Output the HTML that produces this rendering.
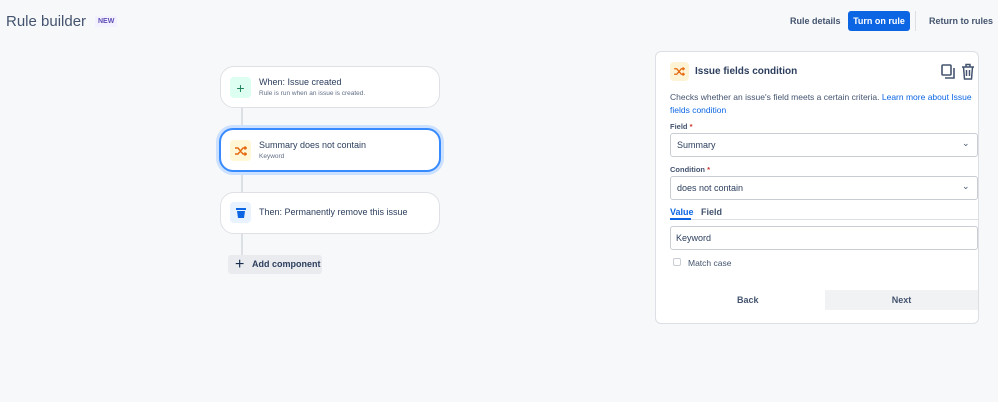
<!DOCTYPE html>
<html><head><meta charset="utf-8"><style>
*{margin:0;padding:0;box-sizing:border-box}
body{width:998px;height:402px;background:#f7f8f9;font-family:"Liberation Sans",sans-serif;color:#172b4d;position:relative;overflow:hidden}
.a{position:absolute;white-space:nowrap}
.card{position:absolute;background:#fff;border:1px solid #dfe1e6;border-radius:14px}
.ic{position:absolute;width:21px;height:21px;border-radius:4px;display:flex;align-items:center;justify-content:center}
.t{font-size:9px;color:#2c3e5d}
.s{font-size:6.5px;color:#626f86}
.sel{position:absolute;left:670px;width:308px;background:#fff;border:1px solid #c9cdd4;border-radius:3px;font-size:9px;color:#2c3e5d;padding-left:6px;display:flex;align-items:center}
.lbl{font-size:7.5px;font-weight:bold;color:#44546f}
.lbl b{color:#c9372c}
</style></head><body>
<div class="a" style="left:6px;top:13px;font-size:15px;color:#44546f">Rule builder</div>
<div class="a" style="left:95px;top:16px;height:11px;padding:0 3px;background:#f3f0ff;color:#5e4db2;font-size:7px;font-weight:bold;line-height:11px">NEW</div>
<div class="a" style="left:790px;top:16px;font-size:9px;font-weight:bold;color:#44546f">Rule details</div>
<div class="a" style="left:848px;top:11px;width:62px;height:20px;background:#0c66e4;border-radius:3px;color:#fff;font-size:9px;font-weight:bold;text-align:center;line-height:20px">Turn on rule</div>
<div class="a" style="left:915px;top:11px;width:1px;height:20px;background:#dcdfe4"></div>
<div class="a" style="left:929px;top:16px;font-size:9px;font-weight:bold;color:#44546f">Return to rules</div>

<div class="a" style="left:241px;top:108px;width:2px;height:147px;background:#dcdfe4"></div>
<div class="card" style="left:220px;top:66px;width:220px;height:42px"></div>
<div class="ic" style="left:230px;top:77px;background:#dcfff1;color:#1f845a;font-size:14px">+</div>
<div class="a t" style="left:259px;top:77px">When: Issue created</div>
<div class="a s" style="left:259px;top:90px">Rule is run when an issue is created.</div>

<div class="card" style="left:219px;top:128px;width:222px;height:44px;border:2px solid #388bff;box-shadow:0 0 0 3px #cce0ff"></div>
<div class="ic" style="left:230px;top:140px;background:#fff7d6"><svg width="12" height="10" viewBox="0 0 12 10" fill="none" stroke="#e56910" stroke-width="1.4"><path d="M0 2h3l5 6h3M0 8h3l5-6h3M9.5 0.5l1.8 1.5-1.8 1.5M9.5 6.5l1.8 1.5-1.8 1.5"/></svg></div>
<div class="a t" style="left:259px;top:140px">Summary does not contain</div>
<div class="a s" style="left:259px;top:153px">Keyword</div>

<div class="card" style="left:220px;top:192px;width:220px;height:42px"></div>
<div class="ic" style="left:230px;top:202px;background:#e9f2ff"><svg width="10" height="11" viewBox="0 0 10 11"><rect x="0" y="1" width="10" height="2" fill="#0c66e4"/><path d="M1 4h8l-1 7H2z" fill="#0c66e4"/></svg></div>
<div class="a t" style="left:259px;top:207px">Then: Permanently remove this issue</div>

<div class="a" style="left:228px;top:255px;width:94px;height:19px;background:#e9ebee;border-radius:3px;font-size:9px;font-weight:bold;color:#2c3e5d;line-height:19px;padding-left:24px">Add component</div>
<div class="a" style="left:235px;top:258px;font-size:16px;line-height:13px;color:#172b4d">+</div>

<div class="a" style="left:655px;top:51px;width:324px;height:273px;background:#fff;border:1px solid #dcdfe4;border-radius:6px"></div>
<div class="ic" style="left:670px;top:62px;width:19px;height:19px;background:#fff3d6"><svg width="11" height="9" viewBox="0 0 12 10" fill="none" stroke="#e56910" stroke-width="1.4"><path d="M0 2h3l5 6h3M0 8h3l5-6h3M9.5 0.5l1.8 1.5-1.8 1.5M9.5 6.5l1.8 1.5-1.8 1.5"/></svg></div>
<div class="a" style="left:695px;top:66px;font-size:10px;font-weight:bold;color:#2c3e5d">Issue fields condition</div>
<svg class="a" style="left:941px;top:64px" width="15" height="16" viewBox="0 0 15 16" fill="none" stroke="#44546f" stroke-width="1.6"><rect x="1" y="1" width="9" height="10" rx="1"/><path d="M13 4v10H4"/></svg>
<svg class="a" style="left:961px;top:63px" width="14" height="17" viewBox="0 0 14 17" fill="none" stroke="#44546f" stroke-width="1.5"><path d="M1 4h12M5 4V1.5h4V4M2.5 4l1 12h7l1-12M5.5 7v6M8.5 7v6"/></svg>
<div class="a" style="left:670px;top:91px;font-size:8.5px;line-height:13px;color:#44546f;white-space:normal;width:310px">Checks whether an issue's field meets a certain criteria. <span style="color:#0c66e4">Learn more about Issue fields condition</span></div>
<div class="a lbl" style="left:670px;top:122px">Field <b>*</b></div>
<div class="sel" style="top:133px;height:24px">Summary</div>
<div class="a" style="left:962px;top:138px;font-size:9px;color:#44546f">⌄</div>
<div class="a lbl" style="left:670px;top:165px">Condition <b>*</b></div>
<div class="sel" style="top:176px;height:24px">does not contain</div>
<div class="a" style="left:962px;top:181px;font-size:9px;color:#44546f">⌄</div>
<div class="a" style="left:670px;top:207px;font-size:9px;font-weight:bold;color:#0c66e4">Value</div>
<div class="a" style="left:701px;top:207px;font-size:9px;font-weight:bold;color:#44546f">Field</div>
<div class="a" style="left:670px;top:219px;width:308px;height:1px;background:#dcdfe4"></div>
<div class="a" style="left:670px;top:218px;width:21px;height:2px;background:#0c66e4"></div>
<div class="sel" style="top:226px;height:24px;padding-left:5px">Keyword</div>
<div class="a" style="left:673px;top:258px;width:8px;height:8px;border:1px solid #c9cdd4;border-radius:2px;background:#fff"></div>
<div class="a" style="left:688px;top:258px;font-size:8.5px;color:#44546f">Match case</div>
<div class="a" style="left:737px;top:295px;font-size:9px;font-weight:bold;color:#44546f">Back</div>
<div class="a" style="left:825px;top:290px;width:153px;height:20px;background:#f1f2f4;font-size:9px;font-weight:bold;color:#44546f;text-align:center;line-height:20px">Next</div>
</body></html>
